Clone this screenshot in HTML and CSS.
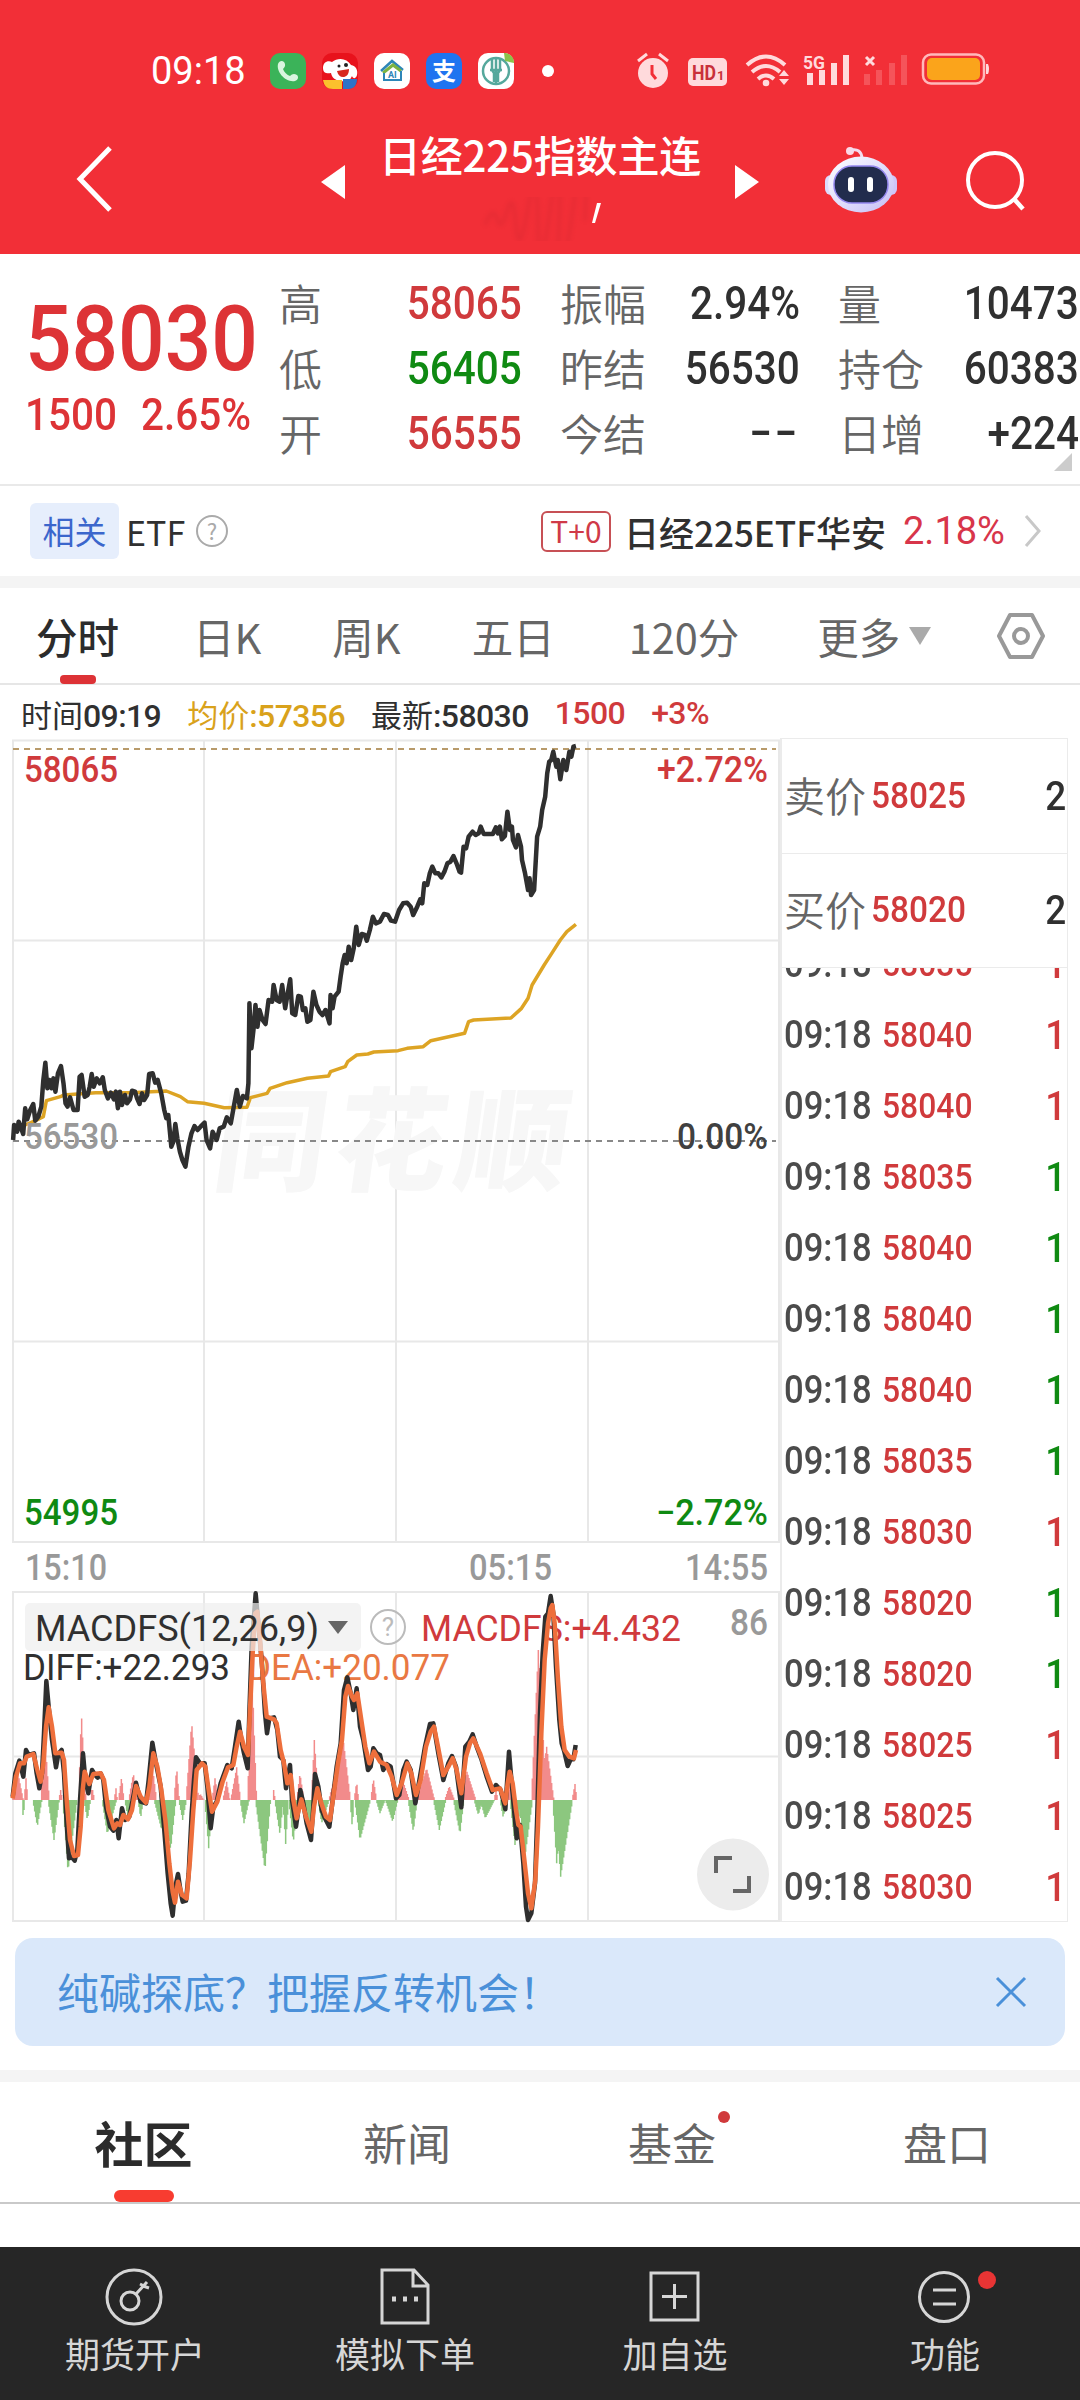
FILE: index.html
```html
<!DOCTYPE html>
<html lang="zh-CN">
<head>
    <meta charset="UTF-8">
    <meta name="viewport" content="width=device-width, initial-scale=1.0">
    <title>日经225指数主连</title>
    <link rel="stylesheet" href="styles.css">
</head>
<body>
    <div id="header">
        <div class="status">
            <span class="clock">09:18</span>
            <div class="apps">
                <svg width="36" height="36" viewBox="0 0 36 36"><rect width="36" height="36" rx="10" fill="#3bb359"/><path d="M8 11c1-3 4-4 6-2 2 3 1 5-1 7 1 3 4 6 7 7 2-2 4-3 7-1 2 2 1 5-2 6C16 30 6 19 8 11z" fill="#d9f5df"/></svg>
                <svg width="36" height="36" viewBox="0 0 36 36"><rect width="36" height="36" rx="10" fill="#e8121c"/><path d="M1 15C1 10 5 7 10 9c6-5 15-4 19 3 5 1 7 5 6 10-1 4-4 4-5 1-2 5-6 6-12 5-5-1-8-3-9-8-4 1-8 0-8-5z" fill="#fff"/><path d="M15 18l12-2c0 6-3 8-6 8s-5-2-6-6z" fill="#d8281f"/><circle cx="17" cy="13" r="1.5" fill="#222"/><circle cx="24" cy="12" r="2" fill="#222"/><path d="M1 27h19v9H11C5 36 2 33 1 27z" fill="#fbc02d"/><path d="M21 26h14c0 6-3 10-9 10h-5z" fill="#2f73c8"/></svg>
                <svg width="36" height="36" viewBox="0 0 36 36"><rect width="36" height="36" rx="10" fill="#fff"/><path d="M7 18L18 8l11 9" fill="none" stroke="#2d86b8" stroke-width="2.5"/><path d="M9 20l10-8 8 6" fill="none" stroke="#7cb342" stroke-width="3"/><path d="M10 20v7h17v-9" fill="none" stroke="#2d86b8" stroke-width="2"/><text x="14" y="25" class="ai">AI</text></svg>
                <svg width="36" height="36" viewBox="0 0 36 36"><rect width="36" height="36" rx="10" fill="#1f74f0"/><text x="6" y="27" class="zhi">支</text></svg>
                <svg width="36" height="36" viewBox="0 0 36 36"><rect width="36" height="36" rx="10" fill="#fff"/><circle cx="18" cy="18" r="13" fill="none" stroke="#55a89c" stroke-width="2.5"/><path d="M18 5v27M14 5v12l2 3v9M22 5v12l-2 3v9M12 17h12" fill="none" stroke="#55a89c" stroke-width="2.5"/><path d="M26 0c6 0 10 4 10 10l-9-2z" fill="#8bc34a"/></svg>
            </div>
            <i class="more-dot"></i>
            <svg class="sys" width="360" height="40" viewBox="0 0 360 40">
                <g fill="#ffdadc">
                    <circle cx="23" cy="22" r="15"/>
                    <path d="M8 10l9-7M29 3l9 7" stroke="#ffdadc" stroke-width="3"/>
                    <path d="M22 14v9l4 5" fill="none" stroke="#f22f37" stroke-width="3"/>
                    <rect x="58" y="7" width="39" height="28" rx="5"/>
                    <path d="M117 14Q136-3 155 14" fill="none" stroke="#ffdadc" stroke-width="4"/>
                    <path d="M122 21q14-12 28 0" fill="none" stroke="#ffdadc" stroke-width="4"/>
                    <path d="M128 28q8-7 16 0" fill="none" stroke="#ffdadc" stroke-width="4"/>
                    <circle cx="136" cy="32" r="3.3"/>
                    <path d="M149 25l5-6 5 6zM149 28h10l-5 6z"/>
                    <path d="M177 22h6v12h-6zM189 19h6v15h-6zM201 12h6v22h-6zM213 4h6v30h-6z"/>
                    <path d="M236 6l8 8M244 6l-8 8" stroke="#ffdadc" stroke-width="3"/>
                    <path d="M234 23h6v11h-6zM246 19h6v15h-6zM259 12h6v22h-6zM271 4h6v30h-6z" opacity=".22"/>
                    <rect x="293" y="3.500" width="61" height="29" rx="8" fill="none" stroke="#ffb9bb" stroke-width="2.500"/>
                    <rect x="297" y="7" width="53" height="22" rx="5" fill="#fba41b"/>
                    <path d="M356 13h2q2 5 0 10h-2z"/>
                </g>
                <text x="62" y="29" class="hd" textLength="24" lengthAdjust="spacingAndGlyphs">HD</text><text x="87" y="29" class="hd1">1</text>
                <text x="173" y="18" class="g5" textLength="22" lengthAdjust="spacingAndGlyphs">5G</text>
            </svg>
        </div>
        <div class="nav">
            <svg class="back" width="40" height="70" viewBox="0 0 40 70"><path d="M35 4L5 35l30 31" fill="none" stroke="#fff" stroke-width="5"/></svg>
            <svg class="prev" width="24" height="34" viewBox="0 0 24 34"><path d="M24 0v34L0 17z" fill="#fff"/></svg>
            <div class="title">
                <h1>日经225指数主连</h1>
                <svg width="130" height="44" viewBox="0 0 130 44"><path d="M8 28q8-20 12-6t10-8 9 14 12-17 10 16 13-20 8 20 14-15 12 12" fill="none" stroke="#cf2630" stroke-width="4" opacity=".3" class="smear"/><path d="M120 6h4l-6 20h-3z" fill="#fff"/></svg>
            </div>
            <svg class="next" width="24" height="34" viewBox="0 0 24 34"><path d="M0 0v34l24-17z" fill="#fff"/></svg>
            <svg class="robot" width="74" height="68" viewBox="0 0 74 68">
                <defs><linearGradient id="shell" x1="0" y1="0" x2="1" y2="1"><stop offset="0" stop-color="#fff"/><stop offset=".6" stop-color="#dcd8fb"/><stop offset="1" stop-color="#c3bdf4"/></linearGradient></defs>
                <circle cx="26" cy="5" r="4" fill="#fbd9e6"/><path d="M27 4q10-2 11 8" fill="none" stroke="#f4dbee" stroke-width="3"/>
                <rect x="1" y="29" width="12" height="20" rx="6" fill="#dcdcfc"/><rect x="61" y="29" width="12" height="20" rx="6" fill="#cfc6fa"/>
                <ellipse cx="37" cy="38.500" rx="33" ry="28" fill="url(#shell)"/>
                <rect x="10" y="20" width="54" height="37" rx="18" fill="#222c4d" stroke="#9487ee" stroke-width="1.500"/>
                <rect x="24" y="31" width="6" height="15" rx="3" fill="#fff"/><rect x="43" y="31" width="6" height="15" rx="3" fill="#fff"/>
            </svg>
            <svg class="search" width="62" height="66" viewBox="0 0 62 66"><circle cx="29" cy="31" r="27" fill="none" stroke="#fff" stroke-width="4"/><path d="M48 50l9 10" stroke="#fff" stroke-width="4.500"/></svg>
        </div>
    </div>

    <div id="quote">
        <div class="price">
            <p class="last num">58030</p>
            <p class="chg num"><span>1500</span><span>2.65%</span></p>
        </div>
        <ul class="stats">
            <li><label>高</label><b class="num red">58065</b></li>
            <li><label>振幅</label><b class="num">2.94%</b></li>
            <li><label>量</label><b class="num">10473</b></li>
            <li><label>低</label><b class="num green">56405</b></li>
            <li><label>昨结</label><b class="num">56530</b></li>
            <li><label>持仓</label><b class="num">60383</b></li>
            <li><label>开</label><b class="num red">56555</b></li>
            <li><label>今结</label><b class="num dash">−−</b></li>
            <li><label>日增</label><b class="num">+224</b></li>
        </ul>
        <i class="corner"></i>
    </div>

    <div id="related">
        <span class="tag">相关</span>
        <span class="etf">ETF</span>
        <span class="help">?</span>
        <span class="t0">T+0</span>
        <span class="name">日经225ETF华安</span>
        <span class="pct num">2.18%</span>
        <svg width="20" height="34" viewBox="0 0 20 34"><path d="M3 2l13 15L3 32" fill="none" stroke="#c8c8c8" stroke-width="3"/></svg>
    </div>

    <div id="period">
        <span class="on">分时</span><span>日K</span><span>周K</span><span>五日</span><span>120分</span><span class="more">更多<i></i></span>
        <svg width="50" height="48" viewBox="0 0 50 48"><path d="M14 3h22l11 21-11 21H14L3 24z" fill="none" stroke="#999" stroke-width="4" stroke-linejoin="round"/><circle cx="25" cy="24" r="7" fill="none" stroke="#999" stroke-width="4"/></svg>
    </div>

    <div id="main">
        <div class="charts">
            <div class="info">
                <span>时间<em class="num">09:19</em></span>
                <span class="avg">均价<em class="num">:57356</em></span>
                <span>最新<em class="num">:58030</em></span>
                <span class="red num">1500</span>
                <span class="red num">+3%</span>
            </div>
            <svg id="minute" width="780" height="807" viewBox="0 738 780 807">
                <path class="grid" d="M13 740.500H779V1542H13zM204 740V1542M396 740V1542M588 740V1542M13 940.500H779M13 1341.500H779"/>
                <text class="mark" x="216" y="1182" textLength="354" transform="translate(200 0) skewX(-8) translate(-40 0)">同花顺</text>
                <path d="M13 749H776" stroke="#b89a6a" stroke-width="2" stroke-dasharray="6 5"/>
                <path d="M13 1141H776" stroke="#888" stroke-width="2" stroke-dasharray="6 5"/>
                <svg x="0" y="738" width="780" height="807" viewBox="0 24 1548 2421" preserveAspectRatio="none">
                    <polyline id="avgLine" class="line" stroke="#dda424"/>
                    <polyline id="priceLine" class="line thick" stroke="#2f2f2f"/>
                </svg>
                <text class="lab red" x="24" y="782" textLength="94" lengthAdjust="spacingAndGlyphs">58065</text>
                <text class="lab red" x="657" y="782" textLength="111" lengthAdjust="spacingAndGlyphs">+2.72%</text>
                <text class="lab gray" x="24" y="1149" textLength="94" lengthAdjust="spacingAndGlyphs">56530</text>
                <text class="lab" x="677" y="1149" textLength="91" lengthAdjust="spacingAndGlyphs">0.00%</text>
                <text class="lab green" x="24" y="1525" textLength="94" lengthAdjust="spacingAndGlyphs">54995</text>
                <text class="lab green" x="656" y="1525" textLength="112" lengthAdjust="spacingAndGlyphs">−2.72%</text>
            </svg>
            <svg id="axis" width="780" height="46" viewBox="0 1545 780 46">
                <text class="lab gray" x="25" y="1580" textLength="82" lengthAdjust="spacingAndGlyphs">15:10</text>
                <text class="lab gray" x="469" y="1580" textLength="83" lengthAdjust="spacingAndGlyphs">05:15</text>
                <text class="lab gray" x="685" y="1580" textLength="83" lengthAdjust="spacingAndGlyphs">14:55</text>
            </svg>
            <div class="macd">
                <svg width="780" height="332" viewBox="0 1591 780 332">
                    <path class="grid" d="M13 1592H779V1921H13zM204 1592V1921M396 1592V1921M588 1592V1921M13 1756.500H779"/>
                    <text class="lab red thin" x="421" y="1641" textLength="260" lengthAdjust="spacingAndGlyphs">MACDFS:+4.432</text>
                    <text class="lab thin" x="23" y="1680" textLength="207" lengthAdjust="spacingAndGlyphs">DIFF:+22.293</text>
                    <text class="lab orange thin" x="248" y="1680" textLength="202" lengthAdjust="spacingAndGlyphs">DEA:+20.077</text>
                    <text class="lab gray" x="730" y="1635" textLength="38" lengthAdjust="spacingAndGlyphs">86</text>
                    <circle cx="388" cy="1627" r="17" fill="none" stroke="#bbb" stroke-width="2"/>
                    <text class="q" x="388" y="1636" text-anchor="middle">?</text>
                    <svg x="0" y="1591" width="780" height="332" viewBox="0 333 2340 996" preserveAspectRatio="none">
                        <path id="up" stroke="#f28b8b" stroke-width="4.500"/>
                        <path id="down" stroke="#8cc77f" stroke-width="4.500"/>
                        <polyline id="diff" class="line thick" stroke="#2f2f2f"/>
                        <polyline id="dea" class="line thick" stroke="#ee6f3c"/>
                    </svg>
                    <rect x="25" y="1603" width="336" height="48" rx="5" fill="#eee" fill-opacity=".7"/>
                    <text class="lab thin" x="35" y="1641" textLength="284" lengthAdjust="spacingAndGlyphs">MACDFS(12,26,9)</text>
                    <path d="M328 1621h20l-10 13z" fill="#666"/>
                    <circle cx="733" cy="1874.500" r="36" fill="#ececec"/>
                    <path d="M716 1873v-15h16M749 1876v15h-16" fill="none" stroke="#666" stroke-width="4"/>
                </svg>
            </div>
        </div>
        <div class="deal">
            <div class="order"><label>卖价</label><b class="num red">58025</b><b class="num qty">2</b></div>
            <div class="order"><label>买价</label><b class="num red">58020</b><b class="num qty">2</b></div>
            <ul id="ticks"></ul>
        </div>
    </div>

    <div id="tip">
        <span>纯碱探底？把握反转机会！</span>
        <svg width="32" height="32" viewBox="0 0 32 32"><path d="M2 2l28 28M30 2L2 30" stroke="#4a90d9" stroke-width="3"/></svg>
    </div>

    <div id="tabs">
        <span class="on">社区</span><span>新闻</span><span class="dot">基金</span><span>盘口</span>
    </div>

    <div id="footer">
        <a>
            <svg width="60" height="60" viewBox="0 0 60 60"><circle cx="29" cy="30" r="27"/><circle cx="25" cy="34" r="9"/><path d="M31 27l11-12M35 17l4 2M38 19l6 2"/></svg>
            期货开户
        </a>
        <a>
            <svg width="60" height="60" viewBox="0 0 60 60"><path d="M7 3h32l14 15v38H7zM38 3v16h15"/><path d="M17 32h4M28 32h4M39 32h4" stroke-width="5"/></svg>
            模拟下单
        </a>
        <a>
            <svg width="60" height="60" viewBox="0 0 60 60"><path d="M6 6h47v47H6zM29.500 17v25M17 29.500h25"/></svg>
            加自选
        </a>
        <a>
            <svg width="60" height="60" viewBox="0 0 60 60"><circle cx="29" cy="30" r="24.500"/><path d="M18 23h23M18 37h23"/></svg>
            功能<i></i>
        </a>
    </div>
    <script>
        var price = "26,1230 28,1185 34,1205 37,1175 42,1195 46,1212 50,1135 54,1168 60,1140 66,1122 70,1172 76,1160 82,1130 86,1050 90,998 94,1075 98,1050 102,1075 106,1045 110,1085 115,1030 121,1008 126,1060 130,1120 134,1130 139,1102 146,1140 154,1140 158,1040 162,1035 168,1100 174,1095 178,1070 182,1032 186,1070 192,1045 198,1060 204,1042 208,1080 214,1105 220,1088 226,1108 230,1085 234,1135 238,1085 242,1125 248,1095 252,1120 258,1108 262,1082 268,1085 272,1105 277,1122 282,1090 286,1110 292,1095 296,1032 303,1030 308,1058 313,1050 320,1090 326,1140 330,1165 334,1155 340,1250 344,1235 348,1182 352,1225 357,1265 362,1290 368,1310 374,1250 380,1210 386,1188 392,1200 398,1190 406,1178 410,1230 417,1255 422,1205 430,1230 436,1195 444,1190 450,1162 458,1180 464,1130 470,1080 476,1130 482,1098 490,1105 493,1060 495,820 499,955 503,900 507,825 511,890 515,840 521,870 527,882 533,810 540,815 543,765 549,810 555,815 560,765 566,835 571,790 576,748 580,850 586,855 592,798 597,800 601,840 606,835 610,875 616,870 622,785 628,825 634,845 640,855 646,840 654,880 656,795 660,835 664,800 672,785 676,740 680,700 684,675 688,700 692,650 697,690 702,655 707,590 712,645 718,612 724,615 728,632 734,600 740,560 746,580 754,575 762,552 770,555 776,572 784,575 792,540 800,520 808,518 815,530 820,555 828,530 834,508 838,520 842,460 848,465 853,430 858,410 864,430 870,430 876,442 882,425 888,400 894,395 900,378 906,400 912,425 915,428 920,350 925,355 930,320 938,305 944,315 950,310 954,290 960,312 970,312 978,312 984,292 988,310 992,290 996,328 1002,318 1007,245 1012,300 1016,290 1018,330 1024,352 1028,315 1034,350 1036,390 1042,430 1048,480 1051,445 1054,495 1060,480 1066,320 1072,290 1076,240 1082,200 1086,130 1090,95 1094,90 1098,65 1104,110 1107,90 1112,148 1118,90 1124,120 1130,65 1134,80 1138,50 1143,48",
            avg = "30,1190 50,1185 70,1172 86,1160 92,1112 120,1100 126,1095 190,1088 260,1088 330,1083 358,1100 372,1115 405,1120 445,1133 490,1132 497,1103 530,1090 536,1075 570,1058 610,1045 652,1038 656,1025 685,1010 690,995 708,975 730,972 742,966 790,962 808,955 840,950 855,932 922,910 930,875 940,870 1014,864 1035,835 1048,805 1056,765 1080,705 1095,670 1112,630 1125,605 1143,583",
            diff = "38,950 46,880 58,842 70,890 78,810 86,825 102,820 110,880 118,925 126,880 132,760 139,603 146,680 156,780 168,862 175,822 185,810 192,880 200,1030 207,1135 214,1130 224,1142 232,1110 240,960 249,820 256,900 265,940 276,870 285,885 293,893 302,880 310,900 318,980 330,1040 340,1052 349,1020 356,1075 366,985 375,1020 388,1010 398,960 408,908 422,965 438,970 446,900 457,788 468,850 482,920 492,1040 503,1180 512,1270 518,1307 526,1220 534,1182 542,1235 548,1265 558,1262 566,1180 575,1000 582,900 588,832 600,850 614,850 622,920 632,1045 640,980 650,965 662,910 682,855 695,865 705,800 716,725 724,780 732,820 743,865 748,700 755,500 767,340 774,420 785,540 795,700 801,760 808,715 822,712 832,750 840,830 850,840 858,925 870,855 876,960 888,1040 895,990 901,930 910,970 920,1030 933,1080 940,980 945,882 955,920 965,990 975,1015 988,1040 998,960 1010,860 1022,790 1032,630 1042,592 1052,640 1060,690 1070,625 1080,740 1090,780 1104,870 1112,860 1120,805 1130,820 1140,825 1150,870 1160,852 1172,860 1182,920 1188,955 1198,945 1210,870 1220,845 1232,870 1246,970 1260,890 1275,800 1290,732 1300,730 1315,820 1330,900 1345,850 1356,828 1368,860 1384,982 1396,800 1408,785 1418,763 1430,800 1445,840 1460,890 1476,935 1488,915 1502,930 1516,988 1527,815 1536,920 1544,1010 1550,1075 1560,1035 1570,1150 1578,1280 1584,1320 1594,1300 1605,1210 1612,1000 1620,700 1628,520 1636,410 1644,400 1652,348 1660,400 1668,560 1678,720 1685,790 1693,815 1703,858 1712,838 1720,838 1727,795",
            dea = "38,955 48,890 60,850 72,850 80,830 100,822 112,870 122,905 130,850 138,740 146,682 156,740 166,820 185,818 192,840 200,960 210,1080 222,1128 234,1125 242,1040 248,930 254,875 268,912 280,882 302,880 312,900 325,990 342,1045 352,1030 360,1035 370,1005 384,1018 396,990 408,918 422,950 438,968 448,920 460,820 472,860 484,930 496,1020 508,1150 518,1235 525,1268 534,1205 546,1245 560,1255 570,1140 580,990 590,870 606,850 616,860 626,930 636,995 652,965 668,905 684,862 700,855 710,800 720,755 732,800 744,825 750,690 758,520 766,400 772,395 780,480 790,610 800,710 822,718 830,730 842,810 852,850 862,910 872,885 880,960 890,1015 904,958 918,1010 934,1055 942,980 952,925 964,970 978,1010 990,1020 1000,950 1014,850 1026,780 1036,650 1044,618 1056,650 1062,660 1072,640 1084,720 1096,800 1108,850 1122,815 1140,845 1160,855 1175,890 1190,945 1205,910 1222,850 1234,880 1248,945 1262,900 1278,800 1292,755 1302,740 1314,800 1330,885 1345,860 1358,835 1370,870 1384,940 1398,830 1410,790 1420,775 1440,820 1460,880 1478,930 1500,925 1516,970 1523,910 1529,875 1538,910 1548,990 1555,1035 1562,1040 1572,1130 1584,1240 1594,1285 1606,1200 1614,1040 1624,760 1634,540 1644,430 1652,385 1657,375 1664,430 1674,600 1684,740 1694,810 1708,830 1722,835 1728,810";
        // 柱状图: 起点, 峰值x, 峰值y, 终点
        var up = [[36,52,870,70],[72,78,895,84],[122,134,760,148],[176,182,930,188],[236,244,697,258],[272,276,920,284],[342,348,925,352],[355,365,890,372],[386,400,880,414],[440,455,840,470],[522,530,862,538],[558,575,728,596],[596,600,940,612],[636,645,895,656],[668,680,905,690],[692,710,862,722],[742,757,600,770],[818,821,930,826],[890,900,880,912],[934,943,780,956],[986,1012,860,1030],[1004,1030,780,1052],[1062,1070,905,1076],[1112,1120,895,1130],[1192,1208,900,1228],[1248,1280,865,1304],[1334,1348,918,1364],[1386,1400,872,1428],[1482,1488,930,1494],[1518,1526,900,1534],[1594,1615,510,1640],[1616,1640,800,1662],[1716,1725,912,1731]],
            down = [[66,70,1020,74],[98,112,1040,126],[144,162,1080,178],[188,204,1175,232],[252,262,1020,272],[306,322,1062,350],[374,383,1010,392],[414,422,1015,430],[462,485,1050,502],[490,512,1110,528],[536,548,1020,560],[614,626,1105,638],[720,732,1030,748],[766,795,1170,812],[824,840,1065,850],[848,857,1092,866],[866,880,1088,894],[908,930,1062,942],[954,965,1030,988],[1050,1057,1045,1062],[1064,1080,1080,1112],[1128,1140,1000,1156],[1156,1178,1025,1194],[1224,1240,1055,1252],[1300,1318,1050,1338],[1360,1380,1062,1392],[1422,1435,1005,1448],[1440,1456,1015,1484],[1500,1510,1015,1518],[1530,1545,1095,1564],[1556,1575,1130,1598],[1658,1670,1150,1690],[1664,1682,1190,1718]];
        function bars(arr){
            var d = "";
            for(var i=0; i<arr.length; i++){
                var a = arr[i];
                for(var x=a[0]; x<=a[3]; x+=3){
                    var t = x < a[1] ? (x-a[0])/(a[1]-a[0]) : (a[3]-x)/(a[3]-a[1]);
                    d += "M" + x + " 960V" + (960 + (a[2]-960)*t);
                }
            }
            return d;
        }
        document.getElementById("priceLine").setAttribute("points", price);
        document.getElementById("avgLine").setAttribute("points", avg);
        document.getElementById("diff").setAttribute("points", diff);
        document.getElementById("dea").setAttribute("points", dea);
        document.getElementById("up").setAttribute("d", bars(up));
        document.getElementById("down").setAttribute("d", bars(down));

        // 成交明细
        var list = [["58035","red"],["58040","red"],["58040","red"],["58035","green"],["58040","green"],["58040","green"],["58040","green"],["58035","green"],["58030","red"],["58020","green"],["58020","green"],["58025","red"],["58025","red"],["58030","red"]],
            html = "";
        for(var i=0; i<list.length; i++){
            html += '<li><span class="num">09:18</span><b class="num red">' + list[i][0] + '</b><b class="num vol ' + list[i][1] + '">1</b></li>';
        }
        document.getElementById("ticks").innerHTML = html;
    </script>
</body>
</html>
```
FILE: styles.css
```css
body,ul,li,p,h1{margin:0;padding:0;}
li{list-style:none;}
em,i{font-style:normal;}
svg{display:block;flex:none;}
body{
    width:1080px;
    height:2400px;
    overflow:hidden;
    background:#fff;
    color:#303030;
    font-family:"Noto Sans CJK SC",sans-serif;
    font-size:40px;
    white-space:nowrap;
}
.num{
    font-family:Roboto,"Noto Sans CJK SC",sans-serif;
    font-weight:500;
}
.red{color:#d03a3c;fill:#d03a3c;}
.green{color:#0f8a12;fill:#0f8a12;}

/* 顶部 */
#header{
    height:254px;
    background:#f22f37;
    color:#fff;
}
.status{
    display:flex;
    align-items:center;
    height:90px;
    padding:52px 0 0 151px;
    box-sizing:border-box;
}
.clock{
    width:119px;
    font-family:Roboto,sans-serif;
    font-size:38px;
    line-height:38px;
}
.apps{
    display:flex;
    gap:16px;
}
.ai{font:bold 9px Roboto,sans-serif;fill:#2d86b8;}
.zhi{font:bold 24px "Noto Sans CJK SC",sans-serif;fill:#fff;}
.hd{font:bold 21px Roboto,sans-serif;fill:#c9303a;}
.hd1{font:bold 13px Roboto,sans-serif;fill:#c9303a;}
.g5{font:bold 19px Roboto,sans-serif;fill:#ffdadc;}
.more-dot{
    width:12px;
    height:12px;
    margin-left:28px;
    border-radius:50%;
    background:#fff;
}
.sys{margin-left:76px;}
.nav{
    display:flex;
    height:164px;
    padding-left:75px;
}
.back{margin-top:54px;}
.prev{margin:75px 0 0 206px;}
.title{
    width:390px;
    text-align:center;
}
.title h1{
    height:70px;
    margin-top:29px;
    font-size:42px;
    font-weight:500;
    line-height:70px;
    letter-spacing:-.2px;
}
.title svg{margin:8px 0 0 132px;}
.smear{filter:blur(2px);}
.next{margin-top:75px;}
.robot{margin:56px 0 0 65px;}
.search{margin:59px 0 0 68px;}

/* 报价 */
#quote{
    position:relative;
    display:flex;
    height:232px;
    border-bottom:2px solid #e9e9e9;
    box-sizing:border-box;
}
.price{
    width:279px;
    padding-left:25px;
    box-sizing:border-box;
    color:#dd3336;
}
.last{
    height:110px;
    margin-top:30px;
    font-size:91px;
    line-height:110px;
    transform:scaleX(.9);
    transform-origin:left;
}
.chg{
    display:flex;
    gap:26px;
    margin-top:2px;
    font-size:44px;
    line-height:38px;
    transform:scaleX(.92);
    transform-origin:left;
}
.stats{
    display:grid;
    grid-template-columns:243px 240px 241px;
    column-gap:38px;
    grid-auto-rows:65px;
    padding-top:16px;
}
.stats li{
    display:flex;
    justify-content:space-between;
    line-height:65px;
}
.stats label{
    color:#666;
    font-size:43px;
    font-weight:350;
}
.stats b{
    margin-top:1px;
    font-size:46px;
    transform:scaleX(.88);
    transform-origin:right;
}
.stats .dash{letter-spacing:3px;}
.corner{
    position:absolute;
    right:8px;
    bottom:13px;
    border-left:18px solid transparent;
    border-bottom:18px solid #ccc;
}

/* 相关 */
#related{
    display:flex;
    align-items:center;
    height:102px;
    padding-left:30px;
    box-sizing:border-box;
    border-bottom:12px solid #f4f4f4;
    font-size:36px;
}
.tag{
    width:89px;
    height:56px;
    border-radius:6px;
    background:#e6eefc;
    color:#3b66cc;
    font-size:32px;
    line-height:54px;
    text-align:center;
}
.etf{
    width:60px;
    margin-left:7px;
    font-size:34px;
}
.help{
    width:28px;
    height:28px;
    margin-left:10px;
    border:2px solid #aaa;
    border-radius:50%;
    color:#aaa;
    font-size:22px;
    line-height:27px;
    text-align:center;
}
.t0{
    width:66px;
    height:37px;
    margin-left:313px;
    border:2px solid #c75055;
    border-radius:6px;
    color:#d03a48;
    font-size:30px;
    line-height:35px;
    text-align:center;
}
.name{
    width:262px;
    margin-left:13px;
    font-weight:500;
    font-size:35px;
}
.pct{
    width:120px;
    margin-left:17px;
    color:#d8354a;
    font-weight:400;
    font-size:38px;
}

/* 周期 */
#period{
    display:flex;
    align-items:center;
    height:97px;
    padding-left:36px;
    box-sizing:border-box;
    border-bottom:2px solid #e6e6e6;
    color:#666;
    font-size:41.5px;
}
#period span{margin-right:74px;}
#period span:nth-child(2){margin-right:71px;}
#period span:nth-child(3){margin-right:71px;}
#period span:nth-child(5){margin-right:78px;}
#period .on{
    position:relative;
    color:#2c2c2c;
    font-weight:500;
}
#period .on::after{
    content:"";
    position:absolute;
    left:24px;
    bottom:-18px;
    width:36px;
    height:9px;
    border-radius:4px;
    background:#dd3236;
}
#period .more{
    display:flex;
    align-items:center;
    margin-right:65px;
}
.more i{
    margin-left:9px;
    border:11px solid transparent;
    border-top:18px solid #aaa;
    border-bottom:0;
}

/* 行情图 */
#main{
    display:flex;
    height:1238px;
}
.charts{width:780px;}
.info{
    display:flex;
    gap:26px;
    height:53px;
    padding:0 0 0 21px;
    font-size:31px;
    line-height:57px;
}
.info .num{
    font-size:32px;
    letter-spacing:-.6px;
}
.avg{color:#d9a21b;}
.grid{
    fill:none;
    stroke:#e8e8e8;
    stroke-width:2;
}
.line{
    fill:none;
    stroke-width:3.5;
    stroke-linejoin:round;
    vector-effect:non-scaling-stroke;
}
.thick{stroke-width:4.5;}
.lab{
    font-family:Roboto,sans-serif;
    font-size:36px;
    font-weight:500;
    fill:#404040;
}
.lab.thin{
    font-weight:400;
    fill:#303030;
}
.lab.red{fill:#d03a3c;}
.lab.green{fill:#0f8a12;}
.lab.gray{fill:#999;}
.lab.orange{fill:#e97843;}
.q{
    font-family:Roboto,sans-serif;
    font-size:26px;
    fill:#bbb;
}
.mark{
    font-family:"Noto Sans CJK SC",sans-serif;
    font-size:112px;
    font-weight:900;
    fill:#f7f7f7;
}
.deal{
    width:288px;
    height:1184px;
    margin-top:53px;
    border:solid #ebebeb;
    border-width:1px 1px 1px 2px;
    box-sizing:border-box;
    overflow:hidden;
}
.order{
    display:flex;
    align-items:center;
    height:114.5px;
    box-sizing:border-box;
    padding:0 1px 0 2px;
    border-bottom:1px solid #ebebeb;
}
.order label{
    width:87px;
    margin-top:-4px;
    color:#666;
    font-size:41px;
    font-weight:350;
}
.order .red{
    font-size:36px;
    transform:scaleX(.93);
    transform-origin:left;
}
.order .qty,#ticks .vol{
    margin-left:auto;
    font-size:41px;
    transform:scaleX(.9);
    transform-origin:right;
}
#ticks{
    height:954px;
    overflow:hidden;
}
#ticks li{
    display:flex;
    align-items:center;
    height:71px;
    padding:0 1px 0 2px;
    position:relative;
    top:-40px;
}
#ticks span{
    width:98px;
    color:#4b4b4b;
    font-size:38px;
    transform:scaleX(.91);
    transform-origin:left;
}
#ticks .red:not(.vol){
    margin-top:2px;
    font-size:35px;
    transform:scaleX(.91);
    transform-origin:left;
}

/* 提示条 */
#tip{
    display:flex;
    align-items:center;
    justify-content:space-between;
    height:108px;
    margin:15px 15px 24px;
    padding:0 38px 4px 42px;
    box-sizing:border-box;
    border-radius:18px;
    background:#dae8fa;
    color:#4a90d9;
    font-size:42px;
}
#tip svg{margin-top:4px;}

/* 社区标签 */
#tabs{
    display:grid;
    grid-template-columns:267px 260px 270px 280px;
    height:134px;
    padding-left:10px;
    border-top:12px solid #f4f4f4;
    border-bottom:2px solid #c9c9c9;
    box-sizing:border-box;
    color:#666;
    font-size:44px;
    line-height:120px;
}
#tabs span{
    position:relative;
    text-align:center;
}
#tabs .on{
    color:#2c2c2c;
    font-size:49px;
    font-weight:700;
}
#tabs .on::after{
    content:"";
    position:absolute;
    left:104px;
    bottom:0;
    width:60px;
    height:12px;
    border-radius:6px;
    background:#f83c30;
}
#tabs .dot::after{
    content:"";
    position:absolute;
    right:77px;
    top:29px;
    width:12px;
    height:12px;
    border-radius:50%;
    background:#d03a3c;
}

/* 底部 */
#footer{
    display:flex;
    height:153px;
    margin-top:43px;
    background:#262626;
    color:#d6d6d6;
    font-size:35px;
    line-height:52px;
}
#footer a{
    position:relative;
    flex:1;
    display:flex;
    flex-direction:column;
    align-items:center;
    padding-top:20px;
}
#footer svg{
    fill:none;
    stroke:#d6d6d6;
    stroke-width:3;
}
#footer i{
    position:absolute;
    left:168px;
    top:24px;
    width:18px;
    height:18px;
    border-radius:50%;
    background:#e83434;
}
```
